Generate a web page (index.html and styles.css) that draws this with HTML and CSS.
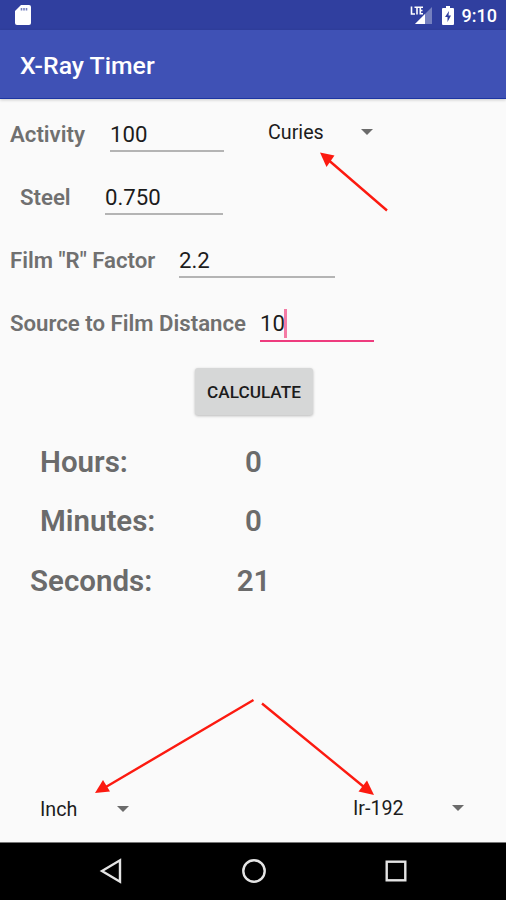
FILE: index.html
```html
<!DOCTYPE html>
<html lang="en">
<head>
<meta charset="utf-8">
<title>X-Ray Timer</title>
<link rel="stylesheet" href="styles.css">
</head>
<body>
<div class="screen">
  <header class="status-bar">
    <svg class="sd" width="16" height="20" viewBox="0 0 16 20"><path d="M6 0H14Q16 0 16 2V18Q16 20 14 20H2Q0 20 0 18V6Z" fill="#fff"/><path d="M6.500 3v2.500M9 3v2.500M11.500 3v2.500" stroke="#7580bd" stroke-width="1.6"/></svg>
    <div class="status-icons">
      <svg width="23" height="20" viewBox="0 0 23 20"><path d="M22 2V19H5Z" fill="#7580bf"/><path d="M15 9V19H5Z" fill="#fff"/><path d="M1.500 1.500V9H5M4.500 2.300H9.500M7 2.300V9.500M13 2.300H10.300V8.800H13M10.300 5.500H12.500" fill="none" stroke="#fff" stroke-width="1.6"/></svg>
      <svg class="battery" width="12" height="19" viewBox="0 0 12 19"><path d="M4 0H8V2H11Q12 2 12 3V18Q12 19 11 19H1Q0 19 0 18V3Q0 2 1 2H4Z" fill="#fff"/><path d="M7 5L3 11H5.5V16L9 9.5H6.5Z" fill="#303f9f"/></svg>
      <span class="clock">9:10</span>
    </div>
  </header>
  <div class="app-bar"><h1>X-Ray Timer</h1></div>
  <main>
    <div class="row">
      <label class="activity">Activity</label><div class="field f-activity">100</div>
      <div class="spinner curies"><span>Curies</span><i class="caret"></i></div>
    </div>
    <div class="row"><label class="steel">Steel</label><div class="field f-steel">0.750</div></div>
    <div class="row"><label class="film">Film "R" Factor</label><div class="field f-film">2.2</div></div>
    <div class="row"><label class="distance">Source to Film Distance</label><div class="field f-distance">10<i class="cursor"></i></div></div>
    <button class="calculate">CALCULATE</button>
    <section class="results">
      <div class="result"><span class="name">Hours:</span><span class="value">0</span></div>
      <div class="result"><span class="name">Minutes:</span><span class="value">0</span></div>
      <div class="result seconds"><span class="name">Seconds:</span><span class="value">21</span></div>
    </section>
    <div class="bottom">
      <div class="spinner inch"><span>Inch</span><i class="caret"></i></div>
      <div class="spinner isotope"><span>Ir-192</span><i class="caret"></i></div>
    </div>
  </main>
  <nav>
    <svg width="24" height="26" viewBox="0 0 24 26"><path d="M3 13L21 2.3V23.7Z"/></svg>
    <svg width="26" height="26" viewBox="0 0 26 26"><circle cx="13" cy="13" r="10.7"/></svg>
    <svg width="24" height="26" viewBox="0 0 24 26"><rect x="2.7" y="3.7" width="18.6" height="18.6"/></svg>
  </nav>
  <svg class="arrows" width="506" height="900" viewBox="0 0 506 900">
    <g stroke="#fc1a10" stroke-width="2.4"><path d="M387 210.500L329 160.500M253.500 700L105 787.500M262 703.500L364 787"/></g>
    <g fill="#fc1a10"><path d="M320 152.500L334.500 155.500L326.500 167Z"/><path d="M95 793L103 780L110 791.500Z"/><path d="M374 795L358.500 791.500L367 780.500Z"/></g>
  </svg>
</div>
</body>
</html>
```
FILE: styles.css
```css
* { box-sizing: border-box; }
body { margin: 0; font-family: Roboto, "Liberation Sans", sans-serif; }
.screen { position: relative; width: 506px; height: 900px; display: flex; flex-direction: column; background: #fafafa; overflow: hidden; }
.status-bar { height: 30px; flex: none; background: #303f9f; color: #fff; display: flex; justify-content: space-between; padding: 5px 9px 0 15px; }
.status-icons { display: flex; align-items: flex-start; }
.battery { margin: 1px 8px 0 9px; }
.clock { font-size: 18px; font-weight: 500; line-height: 22px; }
.app-bar { height: 69px; flex: none; background: #3f51b5; border-bottom: 1px solid #1c35a3; box-shadow: 0 1px 3px #0003; color: #fff; padding: 20px 0 0 20px; }
h1 { margin: 0; font-size: 24.8px; line-height: 32px; font-weight: 500; }
main { flex: 1; display: flex; flex-direction: column; padding-top: 3px; }
.row { height: 63px; flex: none; display: flex; align-items: center; padding-left: 10px; }
label { color: #707070; font-size: 22.2px; font-weight: 600; line-height: 30px; white-space: nowrap; flex: none; }
.activity { width: 100px; }
.steel { width: 95px; padding-left: 10px; }
.film { width: 169px; }
.distance { width: 250px; }
.field { height: 36px; line-height: 36px; font-size: 22.2px; color: #1c1c1c; border-bottom: 2px solid #b4b4b4; display: flex; }
.f-activity { width: 114px; }
.f-steel { width: 118px; }
.f-film { width: 156px; }
.f-distance { width: 114px; height: 39px; line-height: 41px; border-bottom: 2px solid #ee3c7e; }
.cursor { width: 3px; height: 29px; margin: 6px 0 0 -1px; background: #f47ba5; }
.spinner { display: flex; align-items: center; justify-content: space-between; font-size: 19.7px; line-height: 24px; color: #1c1c1c; }
.spinner span { padding-top: 2px; margin-bottom: -2px; }
.caret { width: 0; height: 0; border: 6px solid transparent; border-top-color: #6b6b6b; border-bottom: 0; margin-top: 2px; }
.curies { width: 105px; margin: -5px 0 0 44px; }
.calculate { width: 118px; height: 47px; flex: none; margin: 14px 0 0 195px; padding: 0; border: 0; border-radius: 3px; background: #d6d7d7; box-shadow: 0 1px 3px #0004; color: #1c1c1c; font: 500 17.2px Roboto, sans-serif; }
.results { margin-top: 17px; }
.result { height: 59.5px; display: flex; align-items: center; padding-left: 40px; color: #6b6b6b; font-size: 29.5px; font-weight: 600; }
.name { width: 164px; }
.value { width: 99px; text-align: center; }
.seconds { padding-left: 30px; }
.seconds .name { width: 174px; }
.bottom { margin-top: auto; height: 46px; padding: 0 42px 0 40px; display: flex; justify-content: space-between; align-items: flex-start; }
.inch { width: 89px; }
.isotope { width: 111px; margin-top: -1px; }
nav { height: 58px; flex: none; background: #000; border-top: 1px solid #777; display: flex; justify-content: space-between; padding: 15px 98px 0 99px; }
nav svg { fill: none; stroke: #e4e4e4; stroke-width: 2.4; }
.arrows { position: absolute; left: 0; top: 0; pointer-events: none; }
```
